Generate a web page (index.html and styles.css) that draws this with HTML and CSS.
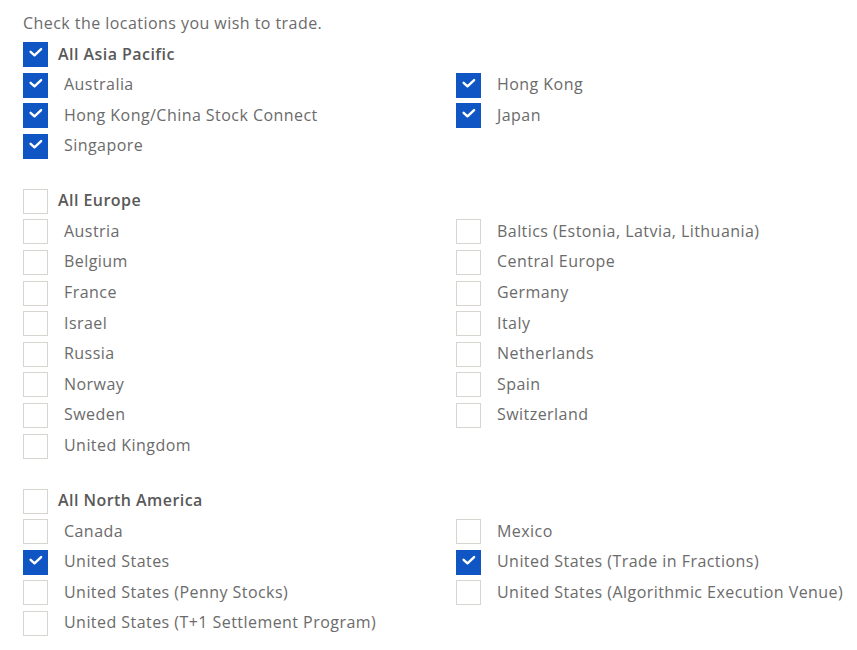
FILE: index.html
```html
<!DOCTYPE html>
<html lang="en">
<head>
<meta charset="utf-8">
<link rel="stylesheet" href="styles.css">
</head>
<body>
<div class="page">
  <p class="intro">Check the locations you wish to trade.</p>

  <section class="group">
    <label class="row head"><span class="box on"><svg viewBox="0 0 25 25"><path d="M7.2 9.6 L11.4 13.4 L18.6 6.6"/></svg></span><span>All Asia Pacific</span></label>
    <div class="items">
      <label class="row"><span class="box on"><svg viewBox="0 0 25 25"><path d="M7.2 9.6 L11.4 13.4 L18.6 6.6"/></svg></span><span>Australia</span></label>
      <label class="row"><span class="box on"><svg viewBox="0 0 25 25"><path d="M7.2 9.6 L11.4 13.4 L18.6 6.6"/></svg></span><span>Hong Kong</span></label>
      <label class="row"><span class="box on"><svg viewBox="0 0 25 25"><path d="M7.2 9.6 L11.4 13.4 L18.6 6.6"/></svg></span><span>Hong Kong/China Stock Connect</span></label>
      <label class="row"><span class="box on"><svg viewBox="0 0 25 25"><path d="M7.2 9.6 L11.4 13.4 L18.6 6.6"/></svg></span><span>Japan</span></label>
      <label class="row"><span class="box on"><svg viewBox="0 0 25 25"><path d="M7.2 9.6 L11.4 13.4 L18.6 6.6"/></svg></span><span>Singapore</span></label>
    </div>
  </section>

  <section class="group">
    <label class="row head"><span class="box"></span><span>All Europe</span></label>
    <div class="items">
      <label class="row"><span class="box"></span><span>Austria</span></label>
      <label class="row"><span class="box"></span><span>Baltics (Estonia, Latvia, Lithuania)</span></label>
      <label class="row"><span class="box"></span><span>Belgium</span></label>
      <label class="row"><span class="box"></span><span>Central Europe</span></label>
      <label class="row"><span class="box"></span><span>France</span></label>
      <label class="row"><span class="box"></span><span>Germany</span></label>
      <label class="row"><span class="box"></span><span>Israel</span></label>
      <label class="row"><span class="box"></span><span>Italy</span></label>
      <label class="row"><span class="box"></span><span>Russia</span></label>
      <label class="row"><span class="box"></span><span>Netherlands</span></label>
      <label class="row"><span class="box"></span><span>Norway</span></label>
      <label class="row"><span class="box"></span><span>Spain</span></label>
      <label class="row"><span class="box"></span><span>Sweden</span></label>
      <label class="row"><span class="box"></span><span>Switzerland</span></label>
      <label class="row"><span class="box"></span><span>United Kingdom</span></label>
    </div>
  </section>

  <section class="group">
    <label class="row head"><span class="box"></span><span>All North America</span></label>
    <div class="items">
      <label class="row"><span class="box"></span><span>Canada</span></label>
      <label class="row"><span class="box"></span><span>Mexico</span></label>
      <label class="row"><span class="box on"><svg viewBox="0 0 25 25"><path d="M7.2 9.6 L11.4 13.4 L18.6 6.6"/></svg></span><span>United States</span></label>
      <label class="row"><span class="box on"><svg viewBox="0 0 25 25"><path d="M7.2 9.6 L11.4 13.4 L18.6 6.6"/></svg></span><span>United States (Trade in Fractions)</span></label>
      <label class="row"><span class="box"></span><span>United States (Penny Stocks)</span></label>
      <label class="row"><span class="box"></span><span>United States (Algorithmic Execution Venue)</span></label>
      <label class="row"><span class="box"></span><span>United States (T+1 Settlement Program)</span></label>
    </div>
  </section>
</div>
</body>
</html>
```

FILE: styles.css
```css
html, body {
  margin: 0;
  padding: 0;
  background: #ffffff;
}

.page {
  padding: 12px 0 0 23px;
  font-family: "Open Sans", "Lato", sans-serif;
  font-size: 16px;
  letter-spacing: 0.45px;
  color: #6b6b6b;
}

.intro {
  margin: 0 0 8px 0;
  line-height: 22px;
}

.group {
  display: flex;
  flex-direction: column;
  gap: 5.6px;
  margin-bottom: 30px;
}

.items {
  display: grid;
  grid-template-columns: 433px 1fr;
  row-gap: 5.6px;
}

.row {
  display: flex;
  align-items: center;
  gap: 16px;
  height: 25px;
  line-height: 22px;
  padding-bottom: 2px;
  box-sizing: border-box;
  white-space: nowrap;
}

.row.head {
  gap: 10px;
  font-weight: 600;
  color: #595959;
}

.box {
  box-sizing: border-box;
  flex: 0 0 25px;
  width: 25px;
  height: 25px;
  margin-bottom: -2px;
  border: 1px solid #d8d4d0;
  background: #fff;
}

.box.on {
  border-color: #0f55c3;
  background: #0f55c3;
}

.box svg {
  display: block;
  width: 23px;
  height: 23px;
  margin: 0;
}

.box svg path {
  fill: none;
  stroke: #ffffff;
  stroke-width: 2.6;
  stroke-linecap: round;
  stroke-linejoin: round;
}
```
